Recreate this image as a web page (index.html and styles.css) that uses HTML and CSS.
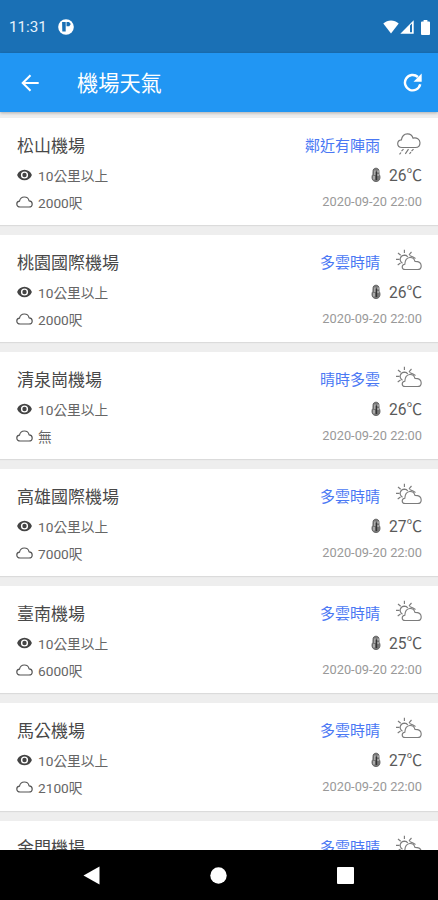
FILE: index.html
```
<!DOCTYPE html>
<html lang="zh-Hant">
<head>
<meta charset="utf-8">
<title>機場天氣</title>
<link rel="stylesheet" href="styles.css">
</head>
<body>
<svg class="defs" width="0" height="0">
  <symbol id="eye" viewBox="0 0 16 12"><path fill="#444" fill-rule="evenodd" d="M8 .7C4.500.7 1.800 2.800.6 6c1.200 3.200 3.900 5.300 7.400 5.300s6.200-2.100 7.400-5.300C14.200 2.800 11.500.7 8 .7zM8 2.400a3.600 3.600 0 1 1 0 7.200 3.600 3.600 0 0 1 0-7.200z"/><circle cx="8" cy="6" r="2.200" fill="#444"/></symbol>
  <symbol id="cloud" viewBox="0 0 17 12"><path fill="none" stroke="#555" stroke-width="1.200" d="M4.200 11C2.200 11 .8 9.900.8 8.100c0-1.600 1.100-2.700 2.700-2.900C4 2.600 5.900 1 8.300 1c2.400 0 4.300 1.500 4.800 3.800 1.800.1 3.100 1.300 3.100 3.100S14.900 11 13 11z"/></symbol>
  <symbol id="thermo" viewBox="0 0 10 16"><path fill="#777" stroke="#666" d="M2 4.500C2 2.200 3.100 1.200 5 1.200s3 1 3 3.300v2.800c.7.800 1 1.800 1 3 0 2.700-1.500 4.200-4 4.200s-4-1.500-4-4.200c0-1.200.3-2.200 1-3z"/><path fill="none" stroke="#ddd" stroke-width="1" d="M4 3.500v4.500M3 9v3.500M7 3.500v2M7 7v2"/><path stroke="#333" stroke-width="1.500" d="M5.400 4.500v8.500"/></symbol>
  <symbol id="rain" viewBox="0 0 28 24"><g fill="none" stroke="#777" stroke-width="1.150"><path d="M7 15.500c-2.600 0-4.300-1.600-4.300-3.700 0-2.200 1.500-3.700 3.700-3.900C7 4 9 1.800 12.400 1.800c3 0 5 1.700 5.600 4.300 3.600-1 7 1.100 7 4.600 0 3-1.900 4.800-4.600 4.800z"/><path d="M8.500 17.200l-2 2M6 20.500l-1.500 1.800M13.500 17.200l-3.200 4.600M18.500 17.200l-2 2M16 20l-1.500 1.800"/></g></symbol>
  <symbol id="partly" viewBox="0 0 28 24"><g fill="none" stroke="#7c7c7c" stroke-width="1.150"><path d="M10 20.500c-1.800 0-2.800-1.100-2.800-2.500 0-1.500 1.100-2.500 2.600-2.700C10 11.500 11.800 8.800 14.800 8.500c2.600-.1 4.500 1.300 5.200 3.800 3.600 0 6.200 1.800 6.200 4.600 0 2.200-1.400 3.600-3.700 3.600z"/><path d="M7.500 14.200C3.400 11.500 5.200 6.300 9.500 6.100c1.500 0 2.600.7 3.300 1.900"/><path d="M9.400.8v3.300M3 4l2.700 2.300M16.500 3L14 5.800M1 10.300h3.600M2.700 16l2.800-2"/><path d="M14.500 6.500l3.500 1.500 2.500 1.500"/></g></symbol>
</svg>
<div class="screen">
  <div class="status">
    <span class="clock">11:31</span>
    <svg class="notif" width="16" height="16" viewBox="0 0 16 16"><circle cx="8" cy="8" r="7.800" fill="#fff"/><path fill="none" stroke="#1a70b5" stroke-width="1.800" d="M5 3.800h1.800v7.800H5.200z"/><path fill="#1a70b5" d="M8.500 3h2.500l1.800 2-1.500 2.300H8.500z"/></svg>
    <svg class="wifi" width="16" height="14" viewBox="0 0 16 14"><path fill="#fff" d="M8 13.600L.3 3.600C4.700-.6 11.300-.6 15.700 3.600z"/></svg>
    <svg class="signal" width="14" height="14" viewBox="0 0 14 14"><path fill="#fff" fill-rule="evenodd" d="M13.700.3v13.400H.3zM10 5.600v6.600h2V3.600z"/></svg>
    <svg class="battery" width="9" height="15" viewBox="0 0 9 15"><path fill="#fff" d="M2.600 1.500V0h3.800v1.500H8q1 0 1 1V14q0 1-1 1H1q-1 0-1-1V2.500q0-1 1-1z"/></svg>
  </div>
  <header class="bar">
    <svg width="18" height="18" viewBox="0 0 18 18"><path fill="none" stroke="#fff" stroke-width="2" d="M17.700 9H2M9.500 1.200L1.700 9l7.800 7.800"/></svg>
    <h1>機場天氣</h1>
    <svg width="19" height="19" viewBox="0 0 19 19"><path fill="none" stroke="#fff" stroke-width="2.400" d="M17.200 11.300A7.700 7.700 0 1 1 14.900 4"/><path fill="#fff" d="M18.700.5v8.200h-8.200z"/></svg>
  </header>
  <main class="list" id="list"></main>
  <nav class="nav">
    <svg width="17" height="19" viewBox="0 0 17 19"><path fill="#fff" d="M16.500.5v18L.5 9.500z"/></svg>
    <svg width="17" height="17" viewBox="0 0 17 17"><circle cx="8.500" cy="8.500" r="8.200" fill="#fff"/></svg>
    <svg width="17" height="17" viewBox="0 0 17 17"><rect width="17" height="17" rx="1" fill="#fff"/></svg>
  </nav>
</div>
<script src="app.js"></script>
</body>
</html>
```
FILE: styles.css
```
* { box-sizing: border-box; }
body { margin: 0; font-family: Roboto, "Noto Sans CJK TC", sans-serif; }
svg { display: block; flex: none; }
.defs { position: absolute; }
.screen { width: 438px; height: 900px; display: flex; flex-direction: column; overflow: hidden; background: #eee; }
.status { height: 53px; flex: none; display: flex; align-items: center; padding: 1px 8px 0 9px; background: #1a70b5; color: #e5f1fb; }
.clock { font-size: 15.2px; width: 49px; }
.wifi { margin-left: auto; }
.signal { margin: 0 7px 0 1px; }
.bar { height: 59px; flex: none; display: flex; align-items: center; padding: 0 16px 0 21px; background: #2196f3; color: #fff; box-shadow: 0 1px 3px rgba(0,0,0,.28); position: relative; }
.bar h1 { margin: 3px auto 0 38px; font-size: 21.2px; line-height: 30px; font-weight: 400; }
.list { flex: 1; min-height: 0; overflow: hidden; padding-top: 6px; display: flex; flex-direction: column; gap: 10px; }
.card { flex: none; height: 107.1px; padding: 13px 16px 0 17px; background: #fff; box-shadow: 0 1px 1px rgba(0,0,0,.08); }
.row { display: flex; align-items: center; justify-content: space-between; height: 27px; }
.row.top { height: 30px; margin-top: -2px; margin-bottom: 2px; }
.row > span { display: flex; align-items: center; white-space: nowrap; }
.name { font-size: 17px; color: #484848; }
.weather { font-size: 15px; color: #4a78f4; }
.weather svg { margin: 0 -1px 0 15px; }
.info { font-size: 13.7px; color: #666; gap: 5px; }
.info svg { margin-left: -1px; }
.temp { font-size: 15.6px; color: #5a5a5a; gap: 8px; margin-top: -1px; }
.temp svg { margin-top: 1px; }
.date { font-size: 12.8px; color: #999; }
.nav { height: 50px; flex: none; background: #000; display: flex; align-items: center; justify-content: space-between; padding: 0 84px 0 83px; }
```
FILE: app.js
```
const airports = [
  ['松山機場', '鄰近有陣雨', 'rain', '26℃', '2000呎'],
  ['桃園國際機場', '多雲時晴', 'partly', '26℃', '2000呎'],
  ['清泉崗機場', '晴時多雲', 'partly', '26℃', '無'],
  ['高雄國際機場', '多雲時晴', 'partly', '27℃', '7000呎'],
  ['臺南機場', '多雲時晴', 'partly', '25℃', '6000呎'],
  ['馬公機場', '多雲時晴', 'partly', '27℃', '2100呎'],
  ['金門機場', '多雲時晴', 'partly']
];
const icon = (id, w, h) => `<svg width="${w}" height="${h}"><use href="#${id}"/></svg>`;
const details = (temp, cloud) => `
    <div class="row"><span class="info">${icon('eye', 17, 12)}10公里以上</span><span class="temp">${icon('thermo', 10, 16)}${temp}</span></div>
    <div class="row"><span class="info">${icon('cloud', 17, 12)}${cloud}</span><span class="date">2020-09-20 22:00</span></div>`;
document.getElementById('list').innerHTML = airports.map(([name, weather, kind, temp, cloud]) => `
  <article class="card">
    <div class="row top"><span class="name">${name}</span><span class="weather">${weather}${icon(kind, 28, 24)}</span></div>
    ${temp ? details(temp, cloud) : ''}
  </article>`).join('');
```
